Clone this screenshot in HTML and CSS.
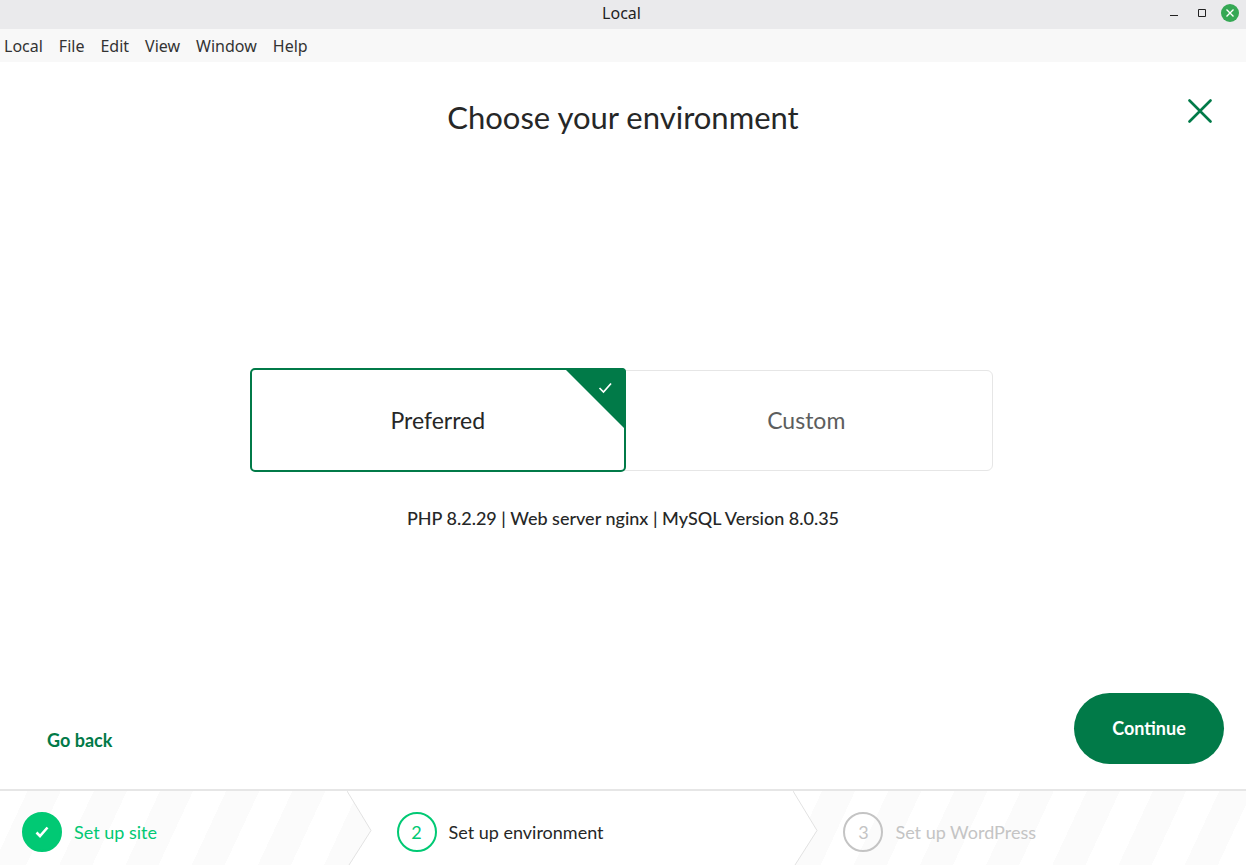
FILE: index.html
```html
<!DOCTYPE html>
<html lang="en">

<head>
    <meta charset="UTF-8">
    <meta name="viewport" content="width=device-width, initial-scale=1.0">
    <title>Local</title>
    <link rel="stylesheet" href="styles.css">
</head>

<body>

    <header class="titlebar">
        <span class="titlebar-name">Local</span>
        <div class="window-buttons">
            <button type="button" aria-label="Minimize">
                <svg width="18" height="18" viewBox="0 0 18 18"><path d="M5 11.5h8" stroke="#222" fill="none"/></svg>
            </button>
            <button type="button" aria-label="Maximize">
                <svg width="18" height="18" viewBox="0 0 18 18"><path d="M5.5 5.5h7v7h-7z" stroke="#222" fill="none"/></svg>
            </button>
            <button type="button" aria-label="Close window">
                <svg width="18" height="18" viewBox="0 0 18 18"><circle cx="9" cy="9" r="9" fill="#35a854"/><path d="M5.5 5.5l7 7M12.5 5.5l-7 7" stroke="#fff" stroke-width="1.4" fill="none"/></svg>
            </button>
        </div>
    </header>

    <nav class="menubar">
        <button type="button">Local</button>
        <button type="button">File</button>
        <button type="button">Edit</button>
        <button type="button">View</button>
        <button type="button">Window</button>
        <button type="button">Help</button>
    </nav>

    <main class="wizard">
        <div class="wizard-header">
            <h1>Choose your environment</h1>
            <button type="button" class="close" aria-label="Close">
                <svg width="24" height="24" viewBox="0 0 24 24"><path d="M1.5 1.5l21 21M22.5 1.5l-21 21" stroke="#017a48" stroke-width="2.6" stroke-linecap="round" fill="none"/></svg>
            </button>
        </div>

        <div class="environment">
            <div class="options">
                <label class="option" for="envPreferred">
                    <input type="radio" id="envPreferred" name="environment" value="preferred" checked>
                    <span>Preferred</span>
                    <svg class="corner" width="62" height="62" viewBox="0 0 62 62"><path d="M0 0h62v62z" fill="#017a48"/><path d="M35.5 20l4 4 7.5-8.500" stroke="#fff" stroke-width="1.7" fill="none"/></svg>
                </label>
                <label class="option" for="envCustom">
                    <input type="radio" id="envCustom" name="environment" value="custom">
                    <span>Custom</span>
                    <svg class="corner" width="62" height="62" viewBox="0 0 62 62"><path d="M0 0h62v62z" fill="#017a48"/><path d="M35.5 20l4 4 7.5-8.500" stroke="#fff" stroke-width="1.7" fill="none"/></svg>
                </label>
            </div>
            <p class="versions">PHP 8.2.29 | Web server nginx | MySQL Version 8.0.35</p>
        </div>

        <div class="actions">
            <button type="button" class="go-back">Go back</button>
            <button type="button" class="continue">Continue</button>
        </div>
    </main>

    <footer class="steps">
        <div class="step done">
            <span class="step-circle">
                <svg width="14" height="12" viewBox="0 0 14 12"><path d="M1.5 6.5l3.500 3.500 7.500-8.500" stroke="#fff" stroke-width="2.6" fill="none"/></svg>
            </span>
            <span>Set up site</span>
        </div>
        <svg class="chevron" width="25" height="74" viewBox="0 0 25 74"><path d="M0 0l24 39.5-22 34.5h23v-74z" fill="#fff"/><path d="M0 0l24 39.5-22 34.5" stroke="#e2e2e2" fill="none"/></svg>
        <div class="step current">
            <span class="step-circle">2</span>
            <span>Set up environment</span>
        </div>
        <svg class="chevron" width="25" height="74" viewBox="0 0 25 74"><path d="M0 0l24 39.5-22 34.5h-2z" fill="#fff"/><path d="M0 0l24 39.5-22 34.5" stroke="#e2e2e2" fill="none"/></svg>
        <div class="step upcoming">
            <span class="step-circle">3</span>
            <span>Set up WordPress</span>
        </div>
    </footer>

</body>

</html>
```
FILE: styles.css
```css
* {
    box-sizing: border-box;
}

body {
    display: flex;
    flex-direction: column;
    min-height: 100vh;
    margin: 0;
    background-color: #fff;
    color: #262727;
    font-family: Lato, "Liberation Sans", sans-serif;
    font-size: 18px;
}

button {
    padding: 0;
    border: none;
    background: none;
    color: inherit;
    font: inherit;
    cursor: pointer;
}

svg {
    display: block;
}

/* window frame */
.titlebar {
    display: grid;
    grid-template-columns: 1fr auto 1fr;
    align-items: center;
    height: 29px;
    padding: 0 7px 3px 4px;
    background-color: #eaeaec;
    color: #222;
    font-family: "Noto Sans", sans-serif;
    font-size: 16px;
    line-height: 24px;
}

.titlebar-name {
    grid-column: 2;
}

.window-buttons {
    display: flex;
    justify-content: flex-end;
    gap: 10px;
}

.menubar {
    display: flex;
    gap: 16px;
    height: 33px;
    padding: 0 4px;
    background-color: #f8f8f8;
    color: #333;
    font-family: "Noto Sans", sans-serif;
    font-size: 16px;
}

/* wizard */
.wizard {
    display: flex;
    flex: 1;
    flex-direction: column;
}

.wizard-header {
    display: grid;
    grid-template-columns: 1fr auto 1fr;
    padding: 37px 34px 0;
}

h1 {
    grid-column: 2;
    margin: 0;
    font-size: 31px;
    font-weight: 400;
    line-height: 36px;
}

.close {
    justify-self: end;
    align-self: start;
}

.environment {
    display: flex;
    flex: 1;
    flex-direction: column;
    align-items: center;
    justify-content: center;
    padding: 71px 20px 0;
}

.options {
    display: flex;
    width: 100%;
    max-width: 740px;
    height: 101px;
}

.option {
    position: relative;
    display: flex;
    flex: 1;
    align-items: center;
    justify-content: center;
    border: 1px solid #e6e6e6;
    border-radius: 6px;
    color: #5d5e5e;
    font-size: 23px;
    cursor: pointer;
}

.option:has(input:checked) {
    z-index: 1;
    margin: -2px -6px -1px -3px;
    border: 2px solid #017a48;
    border-radius: 5px;
    background-color: #fff;
    color: #262727;
}

.option input {
    position: absolute;
    opacity: 0;
}

.corner {
    position: absolute;
    top: -2px;
    right: -2px;
    display: none;
    border-top-right-radius: 4px;
}

.option input:checked ~ .corner {
    display: block;
}

.versions {
    margin: 35px 0 0;
    font-size: 18px;
    font-weight: 500;
    line-height: 24px;
}

.actions {
    display: flex;
    align-items: flex-end;
    justify-content: space-between;
    padding: 0 22px 25px 47px;
    font-weight: 700;
}

.go-back {
    padding-bottom: 12px;
    color: #017a48;
    line-height: 24px;
}

.continue {
    width: 150px;
    height: 71px;
    padding-bottom: 2px;
    border-radius: 36px;
    background-color: #017a48;
    color: #fff;
}

/* progress */
.steps {
    display: flex;
    border-top: 2px solid #e6e6e6;
    background: repeating-linear-gradient(115deg, #fff 0 25px, #fbfbfb 25px 55px, #fff 55px 60px);
}

.step {
    display: flex;
    align-items: center;
    gap: 12px;
    padding: 21px 0 13px 22px;
}

.step-circle {
    display: flex;
    align-items: center;
    justify-content: center;
    width: 40px;
    height: 40px;
    border: 2px solid;
    border-radius: 50%;
}

.chevron {
    flex: none;
}

.done {
    flex: 345;
    color: #01c974;
}

.done .step-circle {
    border-color: #01c974;
    background-color: #01c974;
}

.current {
    flex: 422;
    padding-left: 25px;
    background-color: #fff;
}

.current .step-circle {
    color: #01c974;
}

.upcoming {
    flex: 428;
    padding-left: 25px;
    color: #c4c4c4;
}
```
